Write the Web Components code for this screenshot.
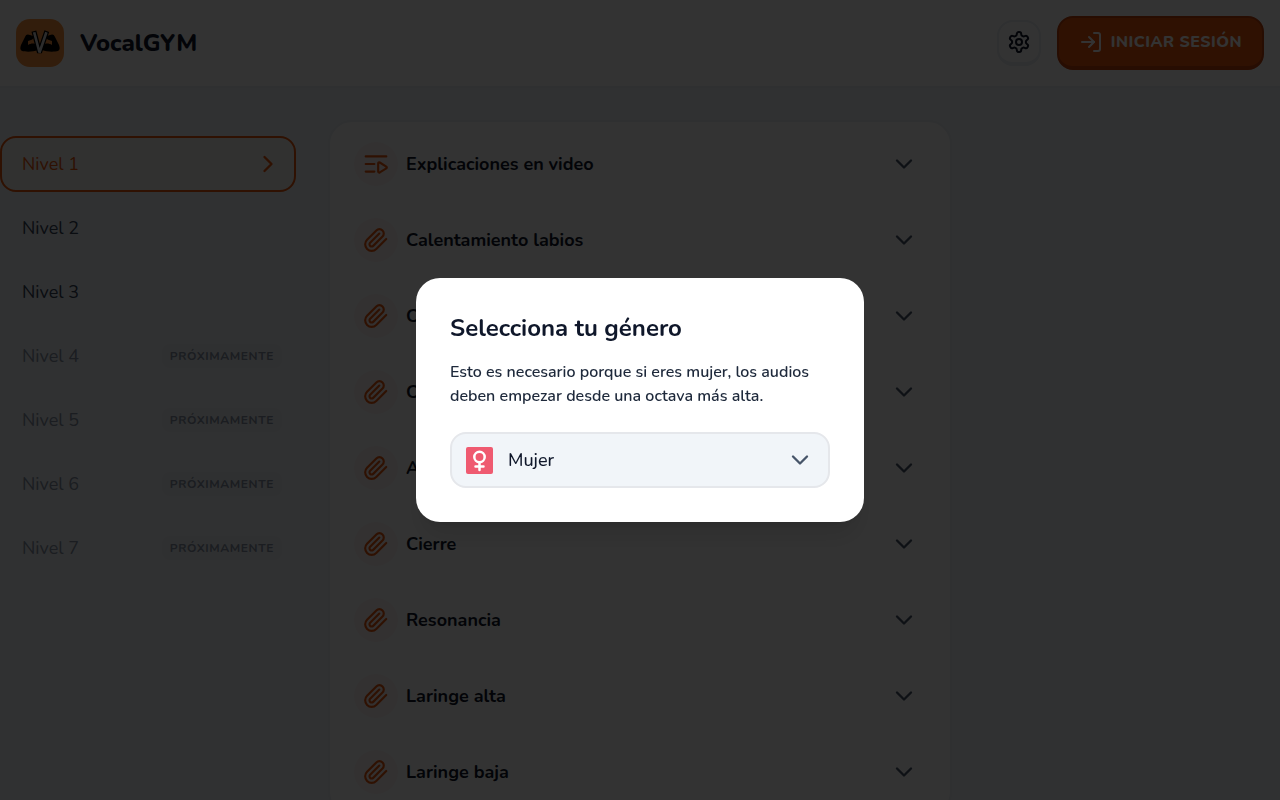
<!DOCTYPE html>
<html lang="es">
<head>
<meta charset="utf-8">
<meta name="viewport" content="width=device-width, initial-scale=1">
<title>VocalGYM</title>
<style>
    body {
        margin: 0;
        min-height: 100vh;
        overflow: hidden;
        background-color: #f1f5f9;
        color: #0f172a;
        font-family: Nunito, Lato, "Noto Sans", sans-serif;
        font-size: 18px;
        --primary: #ea580c;
        --primary-dark: #c2410c;
        --border: #e5e7eb;
        --border-soft: #e8edf2;
        --muted: #475569;
    }
</style>
</head>
<body>
<app-header></app-header>
<app-layout>
    <level-nav slot="nav">
        <level-item active>Nivel 1</level-item>
        <level-item>Nivel 2</level-item>
        <level-item>Nivel 3</level-item>
        <level-item soon>Nivel 4</level-item>
        <level-item soon>Nivel 5</level-item>
        <level-item soon>Nivel 6</level-item>
        <level-item soon>Nivel 7</level-item>
    </level-nav>
    <lesson-list>
        <lesson-row icon="playlist">Explicaciones en video</lesson-row>
        <lesson-row icon="clip">Calentamiento labios</lesson-row>
        <lesson-row icon="clip">Coro</lesson-row>
        <lesson-row icon="clip">Cara</lesson-row>
        <lesson-row icon="clip">Aire</lesson-row>
        <lesson-row icon="clip">Cierre</lesson-row>
        <lesson-row icon="clip">Resonancia</lesson-row>
        <lesson-row icon="clip">Laringe alta</lesson-row>
        <lesson-row icon="clip">Laringe baja</lesson-row>
    </lesson-list>
</app-layout>
<app-modal heading="Selecciona tu género">
    Esto es necesario porque si eres mujer, los audios deben empezar desde una octava más alta.
    <gender-select slot="control"></gender-select>
</app-modal>

<script>
const ICONS = {
    playlist: '<path d="M2.500 5h19M2.500 12h8M2.500 19h8M14 11.500v7.400a1 1 0 0 0 1.500.9l6-3.700a1 1 0 0 0 0-1.700l-6-3.800a1 1 0 0 0-1.500.9z"/>',
    clip: '<path d="m21.440 11.050-9.190 9.190a6 6 0 0 1-8.490-8.490l8.570-8.570A4 4 0 1 1 18 8.840l-8.590 8.570a2 2 0 0 1-2.830-2.830l8.490-8.480"/>',
    down: '<path d="m6 9 6 6 6-6"/>',
    right: '<path d="m9 18 6-6-6-6"/>',
    login: '<path d="M15 3h4a2 2 0 0 1 2 2v14a2 2 0 0 1-2 2h-4"/><path d="m10 17 5-5-5-5"/><path d="M15 12H3"/>',
    settings: '<path d="M12.220 2h-.44a2 2 0 0 0-2 2v.18a2 2 0 0 1-1 1.730l-.43.25a2 2 0 0 1-2 0l-.15-.08a2 2 0 0 0-2.730.73l-.22.38a2 2 0 0 0 .73 2.730l.15.1a2 2 0 0 1 1 1.720v.51a2 2 0 0 1-1 1.740l-.15.09a2 2 0 0 0-.73 2.730l.22.38a2 2 0 0 0 2.730.73l.15-.08a2 2 0 0 1 2 0l.43.25a2 2 0 0 1 1 1.730V20a2 2 0 0 0 2 2h.44a2 2 0 0 0 2-2v-.18a2 2 0 0 1 1-1.730l.43-.25a2 2 0 0 1 2 0l.15.08a2 2 0 0 0 2.730-.73l.22-.39a2 2 0 0 0-.73-2.730l-.15-.08a2 2 0 0 1-1-1.740v-.5a2 2 0 0 1 1-1.740l.15-.09a2 2 0 0 0 .73-2.730l-.22-.38a2 2 0 0 0-2.730-.73l-.15.08a2 2 0 0 1-2 0l-.43-.25a2 2 0 0 1-1-1.730V4a2 2 0 0 0-2-2z"/><circle cx="12" cy="12" r="3"/>'
};

function icon(name, size) {
    return `<svg width="${size}" height="${size}" viewBox="0 0 24 24" fill="none" stroke="currentColor" stroke-width="2" stroke-linecap="round" stroke-linejoin="round" aria-hidden="true">${ICONS[name]}</svg>`;
}

const RESET = `
    *, *::before, *::after { box-sizing: border-box; }
    svg { display: block; flex: none; }
    button, select { font: inherit; color: inherit; margin: 0; cursor: pointer; }
`;

class AppHeader extends HTMLElement {
    constructor() {
        super();
        this.attachShadow({ mode: 'open' });
        this.shadowRoot.innerHTML = `
            <style>
                ${RESET}
                :host { display: block; }
                header {
                    display: flex;
                    align-items: center;
                    gap: 16px;
                    padding: 16px;
                    background-color: #fff;
                    border-bottom: 2px solid var(--border-soft);
                }
                .brand {
                    display: flex;
                    align-items: center;
                    gap: 16px;
                    margin-right: auto;
                    font-size: 24px;
                    font-weight: 800;
                    line-height: 32px;
                    color: inherit;
                    text-decoration: none;
                }
                .settings {
                    display: grid;
                    place-items: center;
                    width: 44px;
                    height: 46px;
                    padding: 0;
                    background-color: #fff;
                    border: 2px solid var(--border-soft);
                    border-bottom-width: 4px;
                    border-radius: 16px;
                }
                .login {
                    display: flex;
                    align-items: center;
                    gap: 8px;
                    height: 54px;
                    padding: 0 20px;
                    background-color: var(--primary);
                    border: 2px solid var(--primary-dark);
                    border-bottom-width: 4px;
                    border-radius: 16px;
                    color: #fff;
                    font-size: 16px;
                    font-weight: 800;
                    letter-spacing: 0.03em;
                    text-transform: uppercase;
                }
            </style>
            <header>
                <a class="brand" href="#">
                    <svg width="48" height="48" viewBox="0 0 48 48" aria-hidden="true">
                        <rect width="48" height="48" rx="14" fill="#fb923c"/>
                        <path d="M22 31c-5 2-12 2-16 1-2-1-2-3-1-6l4-8c1-3 3-3 5-2l3 1c1 1 0 4-2 4l-3 1v4c3-2 7-2 9 0z" fill="#000"/>
                        <path d="M26 31c5 2 12 2 16 1 2-1 2-3 1-6l-4-8c-1-3-3-3-5-2l-3 1c-1 1 0 4 2 4l3 1v4c-3-2-7-2-9 0z" fill="#000"/>
                        <g fill="none" stroke-linecap="square" stroke-linejoin="bevel">
                            <path d="M18.500 14.500l5 19 6.500-19" stroke="#000" stroke-width="5"/>
                            <path d="M18.500 14.500l5 19 6.500-19" stroke="#ddd" stroke-width="2.600"/>
                        </g>
                    </svg>
                    <span>VocalGYM</span>
                </a>
                <button class="settings" type="button" aria-label="Ajustes">${icon('settings', 24)}</button>
                <button class="login" type="button">${icon('login', 24)}<span>Iniciar sesión</span></button>
            </header>
        `;
    }
}

class AppLayout extends HTMLElement {
    constructor() {
        super();
        this.attachShadow({ mode: 'open' });
        this.shadowRoot.innerHTML = `
            <style>
                ${RESET}
                :host {
                    display: grid;
                    grid-template-columns: 1fr minmax(0, 624px) 1fr;
                    column-gap: 32px;
                    align-items: start;
                    padding-top: 32px;
                }
                aside { padding-top: 16px; }
            </style>
            <aside><slot name="nav"></slot></aside>
            <main><slot></slot></main>
        `;
    }
}

class LevelNav extends HTMLElement {
    constructor() {
        super();
        this.attachShadow({ mode: 'open' });
        this.shadowRoot.innerHTML = `
            <style>
                :host { display: block; }
                nav { display: grid; gap: 8px; }
            </style>
            <nav aria-label="Niveles"><slot></slot></nav>
        `;
    }
}

class LevelItem extends HTMLElement {
    connectedCallback() {
        if (this.shadowRoot) return;
        const soon = this.hasAttribute('soon');
        let end = '';
        if (soon) end = '<span class="badge">Próximamente</span>';
        if (this.hasAttribute('active')) end = icon('right', 28);
        this.attachShadow({ mode: 'open' });
        this.shadowRoot.innerHTML = `
            <style>
                ${RESET}
                :host { display: block; }
                button {
                    display: flex;
                    align-items: center;
                    justify-content: space-between;
                    width: 100%;
                    height: 56px;
                    padding: 0 12px 0 20px;
                    background-color: transparent;
                    border: 2px solid transparent;
                    border-radius: 16px;
                    text-align: left;
                    color: #334155;
                }
                button:disabled { color: #8591a3; cursor: default; }
                :host([active]) button {
                    background-color: #f5f2f0;
                    border-color: var(--primary);
                    color: var(--primary);
                }
                .badge {
                    padding: 0 8px;
                    background-color: #ebeef2;
                    border-radius: 8px;
                    color: #8591a3;
                    font-size: 12px;
                    font-weight: 700;
                    line-height: 24px;
                    letter-spacing: 0.05em;
                    text-transform: uppercase;
                }
            </style>
            <button type="button" ${soon ? 'disabled' : ''}><slot></slot>${end}</button>
        `;
    }
}

class LessonList extends HTMLElement {
    constructor() {
        super();
        this.attachShadow({ mode: 'open' });
        this.shadowRoot.innerHTML = `
            <style>
                :host {
                    display: block;
                    padding: 4px 0;
                    background-color: #fff;
                    border: 2px solid var(--border-soft);
                    border-radius: 24px;
                }
            </style>
            <slot></slot>
        `;
    }
}

class LessonRow extends HTMLElement {
    connectedCallback() {
        if (this.shadowRoot) return;
        this.attachShadow({ mode: 'open' });
        this.shadowRoot.innerHTML = `
            <style>
                ${RESET}
                :host { display: block; }
                button {
                    display: flex;
                    align-items: center;
                    gap: 8px;
                    width: 100%;
                    padding: 16px 32px 16px 24px;
                    background: none;
                    border: 0;
                    text-align: left;
                    font-weight: 700;
                }
                .icon {
                    display: grid;
                    place-items: center;
                    width: 44px;
                    height: 44px;
                    border-radius: 50%;
                    background-color: #fff5f5;
                    color: var(--primary);
                }
                .label { flex: 1; }
                .arrow { color: var(--muted); }
            </style>
            <button type="button" aria-expanded="false">
                <span class="icon">${icon(this.getAttribute('icon'), 26)}</span>
                <span class="label"><slot></slot></span>
                <span class="arrow">${icon('down', 28)}</span>
            </button>
        `;
    }
}

class AppModal extends HTMLElement {
    connectedCallback() {
        if (this.shadowRoot) return;
        this.attachShadow({ mode: 'open' });
        this.shadowRoot.innerHTML = `
            <style>
                ${RESET}
                :host {
                    position: fixed;
                    inset: 0;
                    display: grid;
                    place-items: center;
                    padding: 16px;
                    background-color: rgba(0, 0, 0, 0.8);
                }
                section {
                    width: 100%;
                    max-width: 448px;
                    padding: 34px;
                    background-color: #fff;
                    border-radius: 24px;
                    box-shadow: 0 20px 25px -5px rgba(0, 0, 0, 0.1), 0 8px 10px -6px rgba(0, 0, 0, 0.1);
                }
                h2 {
                    margin: 0 0 16px;
                    font-size: 24px;
                    font-weight: 700;
                    line-height: 32px;
                }
                p {
                    margin: 0 0 24px;
                    font-size: 16px;
                    font-weight: 600;
                    line-height: 24px;
                    color: #1e293b;
                }
            </style>
            <section role="dialog" aria-modal="true" aria-labelledby="heading">
                <h2 id="heading">${this.getAttribute('heading')}</h2>
                <p><slot></slot></p>
                <slot name="control"></slot>
            </section>
        `;
    }
}

class GenderSelect extends HTMLElement {
    constructor() {
        super();
        this.attachShadow({ mode: 'open' });
        this.shadowRoot.innerHTML = `
            <style>
                ${RESET}
                :host { display: block; color: #0f172a; }
                label {
                    display: grid;
                    grid-template-columns: auto 1fr auto;
                    align-items: center;
                }
                select {
                    grid-area: 1 / 1 / 2 / 4;
                    width: 100%;
                    height: 56px;
                    padding: 0 48px 0 56px;
                    appearance: none;
                    background-color: #f1f5f9;
                    border: 2px solid var(--border);
                    border-radius: 16px;
                    font-weight: 500;
                }
                svg { grid-row: 1; pointer-events: none; z-index: 1; }
                .sign { grid-column: 1; margin-left: 16px; }
                .arrow { grid-column: 3; margin-right: 16px; color: var(--muted); }
            </style>
            <label>
                <select aria-label="Género">
                    <option selected>Mujer</option>
                    <option>Hombre</option>
                </select>
                <svg class="sign" width="27" height="27" viewBox="0 0 27 27" fill="none" stroke="#fff" stroke-width="2.500" aria-hidden="true">
                    <rect width="27" height="27" rx="2" fill="#ef5a70" stroke="none"/>
                    <circle cx="13.500" cy="10" r="5.200"/>
                    <path d="M13.500 15.500v7.500M9.500 19.500h8" stroke-linecap="round"/>
                </svg>
                <svg class="arrow" width="28" height="28" viewBox="0 0 24 24" fill="none" stroke="currentColor" stroke-width="2" stroke-linecap="round" stroke-linejoin="round" aria-hidden="true">${ICONS.down}</svg>
            </label>
        `;
    }
}

customElements.define('app-header', AppHeader);
customElements.define('app-layout', AppLayout);
customElements.define('level-nav', LevelNav);
customElements.define('level-item', LevelItem);
customElements.define('lesson-list', LessonList);
customElements.define('lesson-row', LessonRow);
customElements.define('app-modal', AppModal);
customElements.define('gender-select', GenderSelect);
</script>
</body>
</html>
